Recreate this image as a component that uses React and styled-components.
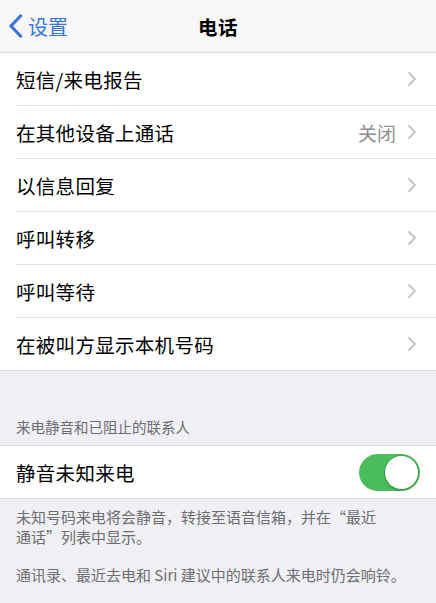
import React, { useState } from 'react';
import styled, { createGlobalStyle } from 'styled-components';

const GlobalStyle = createGlobalStyle`
    html, body {
        margin: 0;
        padding: 0;
        background-color: #efeff4;
    }
    body {
        font-family: "Noto Sans CJK SC", "Noto Sans", sans-serif;
        -webkit-font-smoothing: antialiased;
    }
`;

const Page = styled.div`
    width: 436px;
    height: 603px;
    overflow: hidden;
    background-color: #efeff4;
    color: #000;
`;

const NavBar = styled.header`
    height: 52px;
    display: grid;
    grid-template-columns: 1fr auto 1fr;
    align-items: center;
    background-color: #f7f7f7;
    border-bottom: 1px solid #dcdcde;
`;

const BackButton = styled.button`
    justify-self: start;
    display: flex;
    align-items: center;
    gap: 5px;
    padding: 0 0 0 8px;
    border: none;
    background: none;
    color: #3a74d8;
    font-family: inherit;
    font-size: 20px;
    cursor: pointer;
`;

const Title = styled.h1`
    margin: 0;
    font-size: 19.5px;
    font-weight: 700;
    letter-spacing: 0.5px;
`;

const Group = styled.div`
    background-color: #fff;
    border-bottom: 1px solid #dcdcde;
    ${({ $top }) => $top && 'border-top: 1px solid #dcdcde;'}
`;

const Row = styled.div`
    height: 52px;
    margin-left: 16px;
    padding-right: 20px;
    display: flex;
    align-items: center;
    justify-content: space-between;
    border-bottom: ${({ $last }) => ($last ? 'none' : '1px solid #e2e2e4')};
    cursor: pointer;
`;

const Label = styled.span`
    font-size: 19.5px;
    letter-spacing: 0.3px;
`;

const Trail = styled.span`
    display: flex;
    align-items: center;
    gap: 12px;
`;

const Value = styled.span`
    font-size: 19px;
    color: #8e8e93;
`;

const SectionHeader = styled.div`
    padding: 45px 16px 8px;
    font-size: 14.5px;
    color: #6d6d72;
`;

const Footer = styled.div`
    padding: 8px 16px 0;
    font-size: 15px;
    line-height: 19.5px;
    color: #6d6d72;

    p {
        margin: 0 0 19px;
    }
`;

const SwitchTrack = styled.button`
    width: 61px;
    height: 37px;
    padding: 2px;
    border: none;
    border-radius: 19px;
    background-color: ${({ $on }) => ($on ? '#4bbd5c' : '#e5e5ea')};
    display: flex;
    justify-content: ${({ $on }) => ($on ? 'flex-end' : 'flex-start')};
    align-items: center;
    cursor: pointer;
    margin-right: -4px;
`;

const SwitchKnob = styled.span`
    width: 33px;
    height: 33px;
    border-radius: 50%;
    background-color: #fff;
    box-shadow: 0 0 0 1px rgba(40, 120, 50, 0.35), 0 2px 3px rgba(0, 0, 0, 0.15);
`;

const BackChevron = () => (
    <svg width="15" height="24" viewBox="0 0 15 24">
        <polyline points="12.5,2 3,12 12.5,22" fill="none" stroke="#3a74d8" strokeWidth="3.2" strokeLinecap="round" strokeLinejoin="round" />
    </svg>
);

const Chevron = () => (
    <svg width="8" height="14" viewBox="0 0 8 14">
        <polyline points="1,1 7,7 1,13" fill="none" stroke="#c4c4c8" strokeWidth="1.8" strokeLinecap="round" strokeLinejoin="round" />
    </svg>
);

const items = [
    { label: '短信/来电报告' },
    { label: '在其他设备上通话', value: '关闭' },
    { label: '以信息回复' },
    { label: '呼叫转移' },
    { label: '呼叫等待' },
    { label: '在被叫方显示本机号码' },
];

const App = () => {
    const [silence, setSilence] = useState(true);

    return (
        <Page>
            <GlobalStyle />
            <NavBar>
                <BackButton>
                    <BackChevron />
                    设置
                </BackButton>
                <Title>电话</Title>
                <span />
            </NavBar>

            <Group>
                {items.map((item, i) => (
                    <Row key={item.label} $last={i === items.length - 1}>
                        <Label>{item.label}</Label>
                        <Trail>
                            {item.value && <Value>{item.value}</Value>}
                            <Chevron />
                        </Trail>
                    </Row>
                ))}
            </Group>

            <SectionHeader>来电静音和已阻止的联系人</SectionHeader>
            <Group $top>
                <Row $last>
                    <Label>静音未知来电</Label>
                    <SwitchTrack $on={silence} onClick={() => setSilence(!silence)}>
                        <SwitchKnob />
                    </SwitchTrack>
                </Row>
            </Group>

            <Footer>
                <p>未知号码来电将会静音，转接至语音信箱，并在“最近<br />通话”列表中显示。</p>
                <p>通讯录、最近去电和 Siri 建议中的联系人来电时仍会响铃。</p>
            </Footer>
        </Page>
    );
};

export default App;
